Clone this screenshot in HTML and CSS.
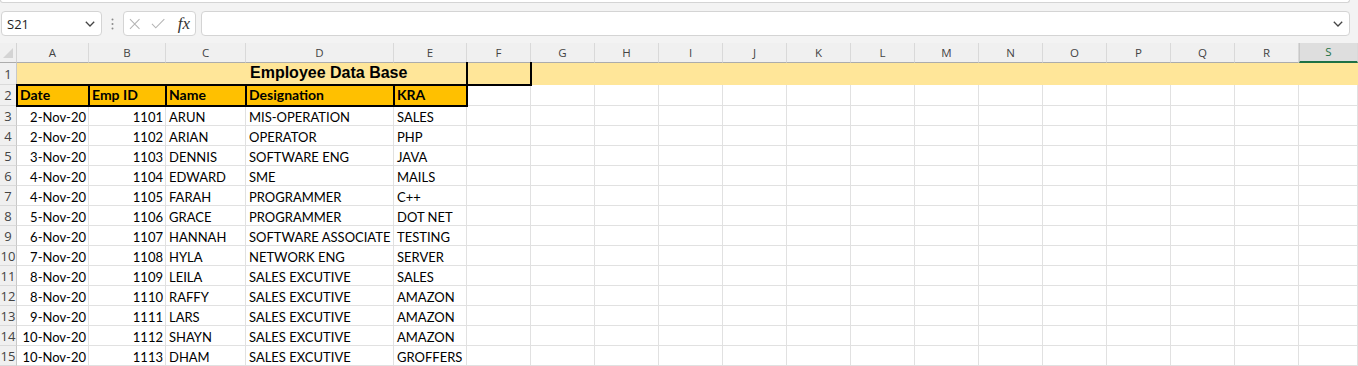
FILE: index.html
```html
<!DOCTYPE html>
<html lang="en">
<head>
    <meta charset="UTF-8">
    <title>Employee Data Base</title>
    <link rel="stylesheet" href="styles.css">
</head>
<body>
    <div class="topbar"></div>

    <div class="formula-row">
        <div class="name-box">
            <span>S21</span>
            <svg width="10" height="6" viewBox="0 0 10 6"><path d="M0.8 0.8 L5 5 L9.2 0.8" fill="none" stroke="#444" stroke-width="1.3"/></svg>
        </div>
        <div class="grip">
            <svg width="3" height="12" viewBox="0 0 3 12"><circle cx="1.5" cy="1.5" r="1" fill="#8a8a8a"/><circle cx="1.5" cy="6" r="1" fill="#8a8a8a"/><circle cx="1.5" cy="10.5" r="1" fill="#8a8a8a"/></svg>
        </div>
        <div class="fx-box">
            <svg class="icon-x" width="12" height="12" viewBox="0 0 12 12"><path d="M1 1 L11 11 M11 1 L1 11" stroke="#b4b4b4" stroke-width="1.1"/></svg>
            <svg class="icon-check" width="15" height="11" viewBox="0 0 15 11"><path d="M1 6 L5 10 L14 1" fill="none" stroke="#b4b4b4" stroke-width="1.1"/></svg>
            <span class="fx">fx</span>
        </div>
        <div class="formula-input">
            <svg width="10" height="6" viewBox="0 0 10 6"><path d="M0.8 0.8 L5 5 L9.2 0.8" fill="none" stroke="#444" stroke-width="1.3"/></svg>
        </div>
    </div>

    <div class="sheet" id="sheet"></div>

    <script>
        const letters = "ABCDEFGHIJKLMNOPQRS".split("");
        const rows = [
            ["2-Nov-20", 1101, "ARUN", "MIS-OPERATION", "SALES"],
            ["2-Nov-20", 1102, "ARIAN", "OPERATOR", "PHP"],
            ["3-Nov-20", 1103, "DENNIS", "SOFTWARE ENG", "JAVA"],
            ["4-Nov-20", 1104, "EDWARD", "SME", "MAILS"],
            ["4-Nov-20", 1105, "FARAH", "PROGRAMMER", "C++"],
            ["5-Nov-20", 1106, "GRACE", "PROGRAMMER", "DOT NET"],
            ["6-Nov-20", 1107, "HANNAH", "SOFTWARE ASSOCIATE", "TESTING"],
            ["7-Nov-20", 1108, "HYLA", "NETWORK ENG", "SERVER"],
            ["8-Nov-20", 1109, "LEILA", "SALES EXCUTIVE", "SALES"],
            ["8-Nov-20", 1110, "RAFFY", "SALES EXCUTIVE", "AMAZON"],
            ["9-Nov-20", 1111, "LARS", "SALES EXCUTIVE", "AMAZON"],
            ["10-Nov-20", 1112, "SHAYN", "SALES EXCUTIVE", "AMAZON"],
            ["10-Nov-20", 1113, "DHAM", "SALES EXCUTIVE", "GROFFERS"]
        ];
        const sheet = document.getElementById("sheet");

        function cell(cls, text) {
            const div = document.createElement("div");
            div.className = "cell " + cls;
            if (text !== undefined) div.textContent = text;
            sheet.appendChild(div);
            return div;
        }

        // column headers
        cell("corner");
        letters.forEach(function(l) {
            cell(l === "S" ? "col-head selected" : "col-head", l);
        });

        // row 1 - title
        cell("row-head", 1);
        cell("fill");
        cell("fill");
        cell("fill");
        cell("fill title edge-r", "Employee Data Base").style.gridColumn = "span 2";
        cell("fill box-f");
        for (let i = 6; i < letters.length; i++) cell("fill");

        // row 2 - table headings
        cell("row-head", 2);
        ["Date", "Emp ID", "Name", "Designation", "KRA"].forEach(function(h) {
            cell("heading box", h);
        });
        for (let i = 5; i < letters.length; i++) cell("");

        // data rows
        rows.forEach(function(r, idx) {
            cell("row-head", idx + 3);
            cell("num", r[0]);
            cell("num", r[1]);
            cell("", r[2]);
            cell("", r[3]);
            cell("", r[4]);
            for (let i = 5; i < letters.length; i++) cell("");
        });
    </script>
</body>
</html>
```

FILE: styles.css
```css
body {
    margin: 0;
    width: 1358px;
    height: 366px;
    overflow: hidden;
    background-color: #f3f3f3;
    font-family: "Lato", "Liberation Sans", sans-serif;
}

.topbar {
    height: 2px;
    margin-right: 8px;
    background-color: white;
    border: 1px solid #d4d4d4;
    border-top: none;
    border-radius: 0 0 4px 4px;
}

.formula-row {
    display: flex;
    align-items: center;
    height: 25px;
    margin-top: 8px;
    padding: 0 8px 0 1px;
}

.name-box {
    box-sizing: border-box;
    width: 101px;
    height: 25px;
    display: flex;
    align-items: center;
    justify-content: space-between;
    padding: 0 6px 0 5px;
    background-color: white;
    border: 1px solid #d4d4d4;
    border-radius: 4px;
    font-family: "Open Sans", sans-serif;
    font-size: 13px;
    color: #222;
}

.grip {
    width: 21px;
    display: flex;
    justify-content: center;
    padding-top: 1px;
}

.fx-box {
    box-sizing: border-box;
    width: 73px;
    height: 25px;
    display: flex;
    align-items: center;
    padding: 0 5px;
    background-color: white;
    border: 1px solid #d4d4d4;
    border-radius: 4px;
}

.icon-x {
    margin-right: 11px;
}

.icon-check {
    margin-right: 12px;
}

.fx {
    font-family: "Liberation Serif", serif;
    font-style: italic;
    font-size: 17px;
    color: #333;
    line-height: 1;
}

.formula-input {
    box-sizing: border-box;
    flex: 1;
    height: 25px;
    margin-left: 5px;
    display: flex;
    align-items: center;
    justify-content: flex-end;
    padding-right: 6px;
    background-color: white;
    border: 1px solid #d4d4d4;
    border-radius: 4px;
}

.sheet {
    margin-top: 7px;
    display: grid;
    grid-template-columns: 17px 72px 77px 80px 148px 73px repeat(13, 64px) 59px;
    grid-template-rows: 20px 22px 21px repeat(13, 20px);
    background-color: white;
}

.cell {
    position: relative;
    box-sizing: border-box;
    display: flex;
    align-items: flex-end;
    padding: 0 3px;
    border-right: 1px solid #e1e1e1;
    border-bottom: 1px solid #e1e1e1;
    font-size: 13px;
    line-height: 16px;
    color: #000;
    white-space: nowrap;
}

.num {
    justify-content: flex-end;
    padding-right: 2px;
}

.corner {
    background-color: #f0f0f0;
    border-right: 1px solid #d4d4d4;
    border-bottom: 1px solid #acacac;
}

.corner::before {
    content: "";
    position: absolute;
    right: 3px;
    bottom: 4px;
    border-left: 10px solid transparent;
    border-bottom: 10px solid #d4d4d4;
}

.col-head {
    justify-content: center;
    align-items: center;
    padding: 0;
    background-color: #f0f0f0;
    border-right: 1px solid #d9d9d9;
    border-bottom: 1px solid #acacac;
    font-family: "Open Sans", sans-serif;
    font-size: 11.5px;
    color: #444;
}

.col-head.selected {
    background-color: #dedede;
    border-bottom: 2px solid #1e7145;
    border-left: 1px solid #c8c8c8;
    color: #1e7145;
}

.row-head {
    justify-content: center;
    align-items: center;
    padding: 0;
    background-color: #f0f0f0;
    border-right: 1px solid #c8c8c8;
    border-bottom: 1px solid #dadada;
    font-family: "Open Sans", sans-serif;
    font-size: 13px;
    color: #444;
    overflow: hidden;
}

.fill {
    background-color: #ffe699;
    border-color: #ffe699;
}

.title {
    padding-bottom: 2px;
    padding-left: 4px;
    font-family: "Liberation Sans", Arial, sans-serif;
    font-weight: bold;
    font-size: 16px;
    line-height: 18px;
}

.heading {
    background-color: #ffc000;
    font-weight: bold;
    font-size: 14px;
    padding-bottom: 2px;
}

.box::after,
.box-f::after,
.edge-r::after {
    content: "";
    position: absolute;
    top: -1px;
    left: -1px;
    right: -2px;
    bottom: -2px;
    border: 2px solid #000;
    z-index: 2;
    pointer-events: none;
}

.edge-r::after {
    border-width: 0 2px 0 0;
}

.box-f::after {
    border-top: none;
}
```
